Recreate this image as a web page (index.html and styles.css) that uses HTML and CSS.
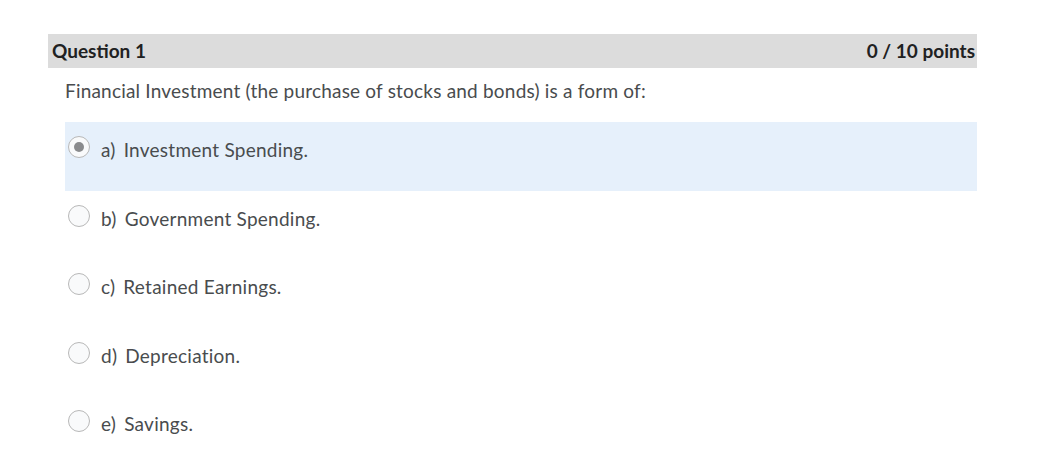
FILE: index.html
```html
<!DOCTYPE html>
<html>
<head>
<meta charset="utf-8">
<link rel="stylesheet" href="styles.css">
</head>
<body>
<div class="question">
  <div class="q-header">
    <span class="q-title">Question 1</span>
    <span class="q-points">0 / 10 points</span>
  </div>
  <div class="q-text">Financial Investment (the purchase of stocks and bonds) is a form of:</div>
  <div class="options">
    <div class="option selected">
      <span class="radio checked"></span>
      <span class="letter">a)</span><span class="label">Investment Spending.</span>
    </div>
    <div class="option">
      <span class="radio"></span>
      <span class="letter">b)</span><span class="label">Government Spending.</span>
    </div>
    <div class="option">
      <span class="radio"></span>
      <span class="letter">c)</span><span class="label">Retained Earnings.</span>
    </div>
    <div class="option">
      <span class="radio"></span>
      <span class="letter">d)</span><span class="label">Depreciation.</span>
    </div>
    <div class="option">
      <span class="radio"></span>
      <span class="letter">e)</span><span class="label">Savings.</span>
    </div>
  </div>
</div>
</body>
</html>
```
FILE: styles.css
```css
html, body {
  margin: 0;
  padding: 0;
  background: #ffffff;
}
body {
  font-family: Lato, "Open Sans", sans-serif;
  color: #494c4e;
  overflow: hidden;
}
.question {
  width: 929px;
  margin-left: 48px;
  padding-top: 34px;
}
.q-header {
  height: 34px;
  background: #dcdcdc;
  display: flex;
  justify-content: space-between;
  align-items: center;
  padding: 0 2px 2px 4px;
  box-sizing: border-box;
  font-weight: 700;
  font-size: 19px;
  color: #202122;
}
.q-text {
  padding: 11px 0 0 17px;
  height: 43px;
  font-size: 19px;
  letter-spacing: 0.2px;
  line-height: 24px;
}
.options {
  margin-left: 17px;
  display: flex;
  flex-direction: column;
}
.option {
  height: 68.5px;
  display: flex;
  align-items: flex-start;
  padding: 16px 0 0 3px;
  box-sizing: border-box;
  font-size: 19px;
  letter-spacing: 0.25px;
  line-height: 24px;
}
.option.selected {
  background: #e6f0fb;
}
.radio {
  width: 22px;
  height: 22px;
  border: 1px solid #b8b8b8;
  border-radius: 50%;
  background: #f9fafb;
  box-sizing: border-box;
  margin-right: 11px;
  margin-top: -2px;
  flex: none;
  display: flex;
  align-items: center;
  justify-content: center;
}
.radio.checked::after {
  content: "";
  width: 10px;
  height: 10px;
  border-radius: 50%;
  background: #8a8b8d;
}
.letter {
  margin-right: 8px;
}
```
